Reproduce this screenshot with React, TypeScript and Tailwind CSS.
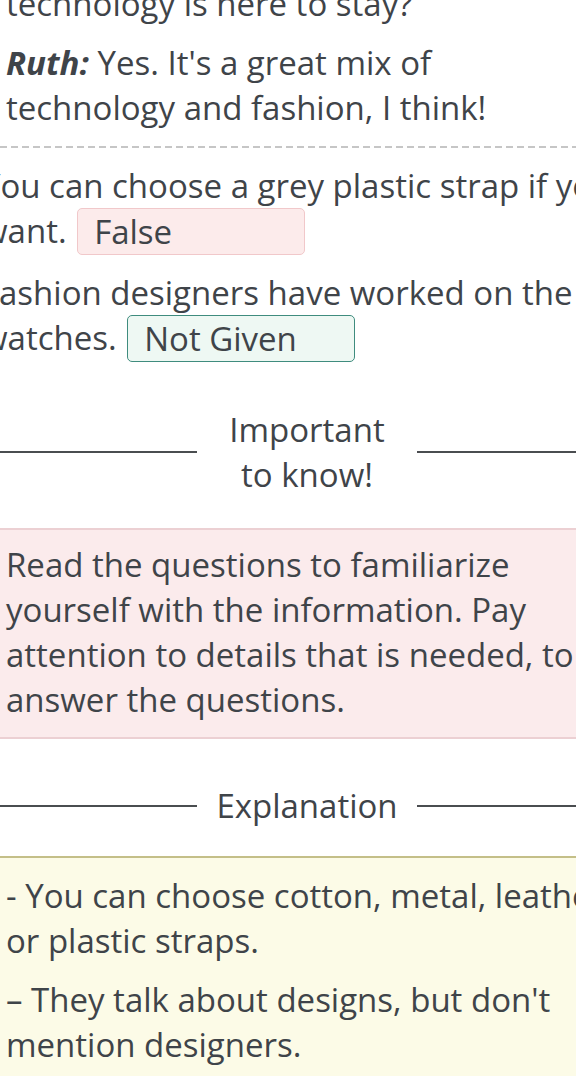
const QUESTIONS = [
  {
    text: 'You can choose a grey plastic strap if you want.',
    answer: 'False',
    box: 'bg-[#fcebeb] border-[#f1c8ca]',
  },
  {
    text: 'Fashion designers have worked on the watches.',
    answer: 'Not Given',
    box: 'bg-[#eef8f3] border-[#3f8c7e]',
  },
];

const EXPLANATIONS = [
  '- You can choose cotton, metal, leather or plastic straps.',
  "\u2013 They talk about designs, but don't mention designers.",
];

function Divider({ children }: { children: React.ReactNode }) {
  return (
    <div className="flex items-center">
      <div className="flex-1 h-[2px] bg-[#4a4d50]" />
      <div className="w-[220px] px-[18px] text-center">{children}</div>
      <div className="flex-1 h-[2px] bg-[#4a4d50]" />
    </div>
  );
}

export default function App() {
  return (
    <div className="w-[576px] h-[1076px] overflow-hidden bg-white font-['Open_Sans',sans-serif] text-[33px] leading-[45px] text-[#3f4449]">
      <div className="w-[614px]">
        {/* Dialogue */}
        <div className="-mt-[19px] pl-[6px] pr-[12px] pb-[16px]">
          <p className="mb-[14px]">technology is here to stay?</p>
          <p>
            <span className="font-bold italic">Ruth:</span> Yes. It's a great mix of technology and
            fashion, I think!
          </p>
        </div>
        <div className="h-[2px] bg-[repeating-linear-gradient(to_right,#c6c6c6_0_7px,transparent_7px_11px)]" />

        {/* Answers */}
        <div className="-ml-[18px] w-[640px] pt-[15px]">
          {QUESTIONS.map((q) => (
            <p key={q.text} className="mb-[15px]">
              {q.text}{' '}
              <span
                className={`inline-block align-top w-[228px] ml-[2px] pl-[16px] border rounded-[5px] ${q.box}`}
              >
                {q.answer}
              </span>
            </p>
          ))}
        </div>

        {/* Important to know */}
        <div className="mt-[45px]">
          <Divider>Important to know!</Divider>
        </div>
        <div className="mt-[31px] border-y-2 border-[#ecd0d3] bg-[#fbebec] pl-[6px] pr-[12px] pt-[12px] pb-[15px]">
          <p>
            Read the questions to familiarize yourself with the information. Pay attention to
            details that is needed, to answer the questions.
          </p>
        </div>

        {/* Explanation */}
        <div className="mt-[44px]">
          <Divider>Explanation</Divider>
        </div>
        <div className="mt-[28px] border-t-2 border-[#c4bf88] bg-[#fcfbe7] pl-[6px] pt-[15px] pb-[20px]">
          <div className="w-[630px]">
            {EXPLANATIONS.map((line) => (
              <p key={line} className="mb-[14px]">
                {line}
              </p>
            ))}
          </div>
        </div>
      </div>
    </div>
  );
}
